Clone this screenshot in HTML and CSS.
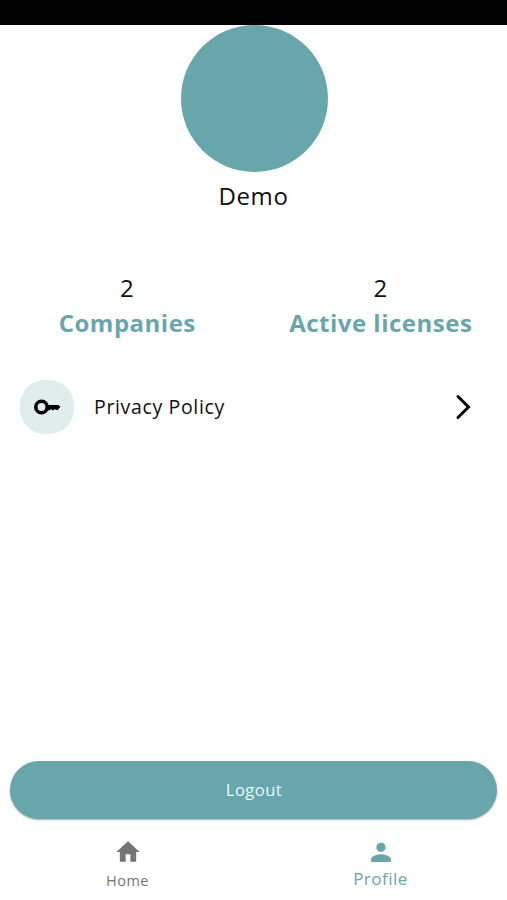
FILE: index.html
```html
<!DOCTYPE html>
<html lang="en">
<head>
<meta charset="utf-8">
<title>Profile</title>
<link rel="stylesheet" href="styles.css">
</head>
<body>
<div class="status"></div>
<main class="content">
  <div class="avatar"></div>
  <h1 class="name">Demo</h1>
  <section class="stats">
    <div class="stat"><span class="count">2</span><span class="label">Companies</span></div>
    <div class="stat"><span class="count">2</span><span class="label">Active licenses</span></div>
  </section>
  <a class="row">
    <span class="badge"><svg width="28" height="16" viewBox="0 0 28 16"><circle cx="8.500" cy="8" r="5.700" fill="none" stroke="#000" stroke-width="3.600"/><path d="M14.500 5.900H25.300L27.400 8 24.600 10.900H23L21.700 9.900 20.400 11.200H19.300L18.100 10.100 16.800 11.200H14.500z"/></svg></span>
    <span class="row-text">Privacy Policy</span>
    <svg class="chevron" width="16" height="26" viewBox="0 0 16 26"><path d="M3 2.500L13.500 13 3 23.500"/></svg>
  </a>
</main>
<button class="logout">Logout</button>
<nav class="tabs">
  <a class="tab"><svg width="28" height="28" viewBox="0 0 24 24"><path d="M10 20.300v-6.300h4v6.300h5v-8.300h3L12 2.700 2 12h3v8.300z"/></svg><span>Home</span></a>
  <a class="tab active"><svg width="28" height="28" viewBox="0 0 24 24"><path d="M12 12c2.210 0 4-1.790 4-4s-1.790-4-4-4-4 1.790-4 4 1.790 4 4 4zm0 2c-2.670 0-8.500 1.340-8.500 4.500v2h17v-2c0-3.160-5.830-4.500-8.500-4.500z"/></svg><span>Profile</span></a>
</nav>
</body>
</html>
```
FILE: styles.css
```css
* { box-sizing: border-box; }
body { margin: 0; height: 900px; display: flex; flex-direction: column; background: #fff; color: #111; font-family: "Open Sans", "Noto Sans", sans-serif; overflow: hidden; }
.status { height: 25px; background: #000; flex: none; }
.content { flex: 1; display: flex; flex-direction: column; }
.avatar { width: 147px; height: 147px; border-radius: 50%; background: #67a7ac; align-self: center; margin-left: 1px; }
.name { margin: 7px 0 0; font-size: 24px; line-height: 34px; font-weight: 400; text-align: center; letter-spacing: .6px; }
.stats { display: grid; grid-template-columns: 1fr 1fr; margin-top: 57px; }
.stat { display: flex; flex-direction: column; align-items: center; font-size: 24px; line-height: 36px; }
.label { margin: -1px 0 0 1px; color: #67a7ac; font-weight: 700; letter-spacing: .5px; white-space: nowrap; }
.row { display: flex; align-items: center; margin-top: 39px; padding: 0 36px 0 20px; height: 54px; }
.badge { width: 54px; height: 54px; border-radius: 25px; background: #e1eded; display: flex; align-items: center; justify-content: center; }
.row-text { flex: 1; margin-left: 20px; padding-bottom: 2px; font-size: 19.500px; letter-spacing: .65px; }
.chevron { fill: none; stroke: #000; stroke-width: 3; stroke-linecap: round; }
.logout { flex: none; height: 58px; margin: 0 10px; padding: 0 0 2px 1px; border: 0; border-radius: 29px; background: #67a7ac; color: #e8f7f9; font: 400 16.500px "Open Sans", "Noto Sans", sans-serif; letter-spacing: .5px; box-shadow: 0 1px 2px rgba(0,0,0,.35); }
.tabs { flex: none; height: 81px; display: grid; grid-template-columns: 1fr 1fr; padding: 19px 0 0 1px; }
.tab { display: flex; flex-direction: column; align-items: center; color: #757575; font-size: 14.500px; line-height: 28px; letter-spacing: .5px; }
.tab span { margin-top: 1px; }
.tab svg { fill: currentColor; }
.active { color: #67a7ac; font-size: 17px; }
.active span { margin-top: -1px; }
```
